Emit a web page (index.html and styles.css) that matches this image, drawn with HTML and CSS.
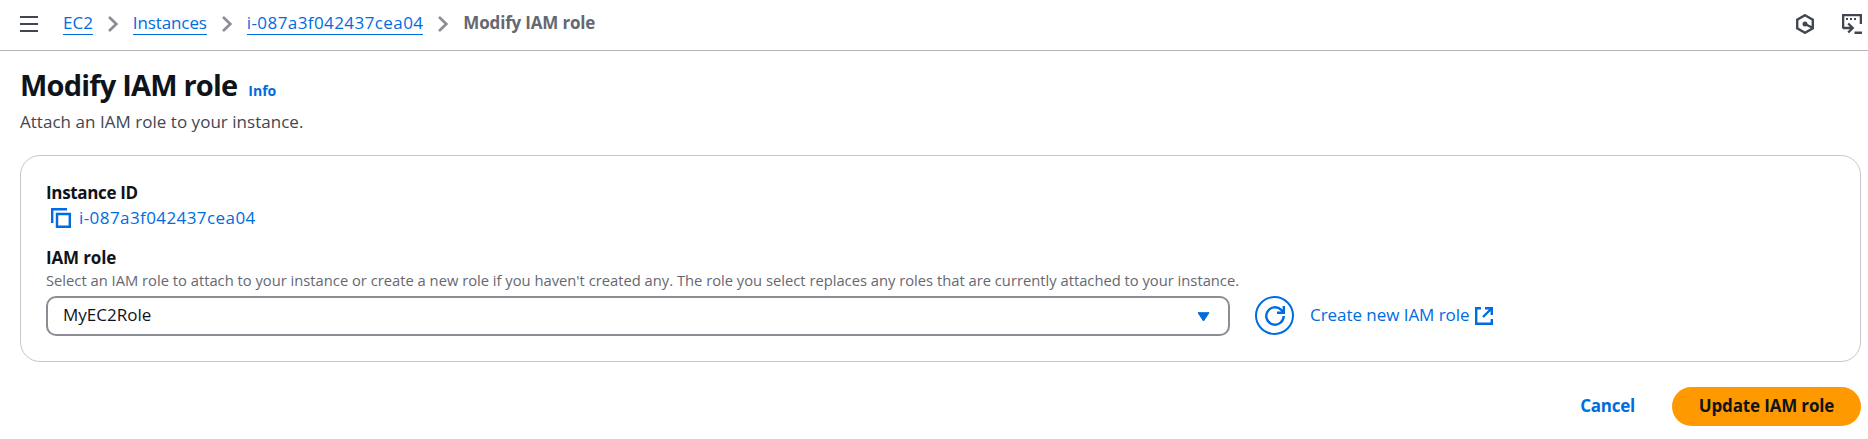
FILE: index.html
```html
<!DOCTYPE html>
<html lang="en">
<head>
<meta charset="utf-8">
<title>Modify IAM role</title>
<link rel="stylesheet" href="styles.css">
</head>
<body>
<header class="topbar">
  <svg class="menu" width="18" height="16" viewBox="0 0 18 16"><path d="M0 1h18M0 8h18M0 15h18"/></svg>
  <nav class="crumbs">
    <a class="c1" href="#">EC2</a>
    <svg class="chev" width="10" height="16" viewBox="0 0 10 16"><path d="M1 1l7.3 7L1 15"/></svg>
    <a class="c2" href="#">Instances</a>
    <svg class="chev" width="10" height="16" viewBox="0 0 10 16"><path d="M1 1l7.3 7L1 15"/></svg>
    <a class="c3" href="#">i-087a3f042437cea04</a>
    <svg class="chev" width="10" height="16" viewBox="0 0 10 16"><path d="M1 1l7.3 7L1 15"/></svg>
    <b class="c4">Modify IAM role</b>
  </nav>
  <div class="tools">
    <svg width="18" height="20" viewBox="0 0 18 20"><path d="M9 1.2l7.8 4.4v8.800L9 18.800l-7.800-4.400V5.600z"/><path d="M9 10l7 3.500"/><circle cx="9" cy="10" r="2.500" class="solid"/></svg>
    <svg width="20" height="20" viewBox="0 0 20 20"><path d="M1.100 14.500V1.100h17.800V10M1 14h9.500M6.200 9.500l4.500 4.500-4.500 4.500M12.500 18.800H20"/><path class="dots" d="M4 5h10"/></svg>
  </div>
</header>
<main class="page">
  <div class="heading"><h1>Modify IAM role</h1><a class="info" href="#">Info</a></div>
  <p class="sub">Attach an IAM role to your instance.</p>
  <section class="card">
    <div class="label l1">Instance ID</div>
    <div class="idrow">
      <svg width="20" height="20" viewBox="0 0 20 20"><path d="M1.200 15V1.200H16"/><path d="M6 6h12.800v12.800H6z"/></svg>
      <a class="id" href="#">i-087a3f042437cea04</a>
    </div>
    <div class="label l2">IAM role</div>
    <div class="hint">Select an IAM role to attach to your instance or create a new role if you haven't created any. The role you select replaces any roles that are currently attached to your instance.</div>
    <div class="controls">
      <div class="select"><span>MyEC2Role</span><svg width="13" height="10" viewBox="0 0 13 10"><path d="M1 .7h11L6.500 9z"/></svg></div>
      <button class="refresh" aria-label="Refresh"><svg width="20" height="20" viewBox="0 0 20 20"><path d="M18.700 10a8.700 8.700 0 1 1-2.500-6.100l2 2.100"/><path d="M18.800 0v6.800H12"/></svg></button>
      <a class="create" href="#">Create new IAM role</a>
      <svg class="ext" width="18" height="18" viewBox="0 0 18 18"><path d="M6 1.200H1.200v15.600h15.600V12M10 1.200h6.800V8M16.500 1.500L8 10"/></svg>
    </div>
  </section>
  <footer class="actions"><a class="cancel" href="#">Cancel</a><button class="update"><span>Update IAM role</span></button></footer>
</main>
</body>
</html>
```
FILE: styles.css
```css
* { box-sizing: border-box; }
body { margin: 0; width: 1868px; height: 439px; overflow: hidden; background: #fff; color: #0f141a; font: 17px/24px "Open Sans", "Noto Sans", sans-serif; }
a { color: #006ce0; text-decoration: none; white-space: nowrap; }
svg { flex: none; fill: none; stroke: currentColor; stroke-width: 2.4; }
button { font: inherit; padding: 0; }
.topbar { display: flex; align-items: center; height: 51px; padding: 0 2px 3px 20px; border-bottom: 1px solid #b4b4bb; color: #424650; }
.menu { stroke-width: 2; }
.crumbs { display: flex; align-items: center; margin-left: 25px; }
.crumbs a { border-bottom: 1px solid #006ce0; line-height: 20px; height: 22px; }
.c2 { letter-spacing: -.1px; }
.c3, .id { letter-spacing: .42px; }
.c4 { letter-spacing: -.17px; line-height: 22px; padding-bottom: 2px; }
.chev { color: #8c8c94; margin: 0 14.9px 0 15px; stroke-width: 2.6; }
.crumbs b { color: #656871; white-space: nowrap; }
.tools { display: flex; align-items: center; gap: 28px; margin-left: auto; margin-right: 4px; }
.solid { fill: currentColor; stroke: none; }
.tools .dots { stroke-dasharray: 2 2; stroke-width: 2; }
.page { padding: 16px 7px 0 20px; }
.heading { display: flex; align-items: baseline; gap: 11px; height: 36px; }
h1 { margin: 0; font-size: 29px; line-height: 36px; letter-spacing: -.8px; white-space: nowrap; }
.info { font-size: 14px; font-weight: 700; }
.sub { margin: 7px 0 0; color: #424650; letter-spacing: .03px; white-space: nowrap; }
.card { margin-top: 21px; height: 207px; padding: 25px 25px 0; border: 1px solid #c6c6cd; border-radius: 20px; }
.label { font-weight: 700; white-space: nowrap; }
.l1 { letter-spacing: -.33px; }
.idrow { display: flex; align-items: center; gap: 8px; height: 26px; padding-left: 5px; color: #006ce0; }
.l2 { margin-top: 15px; letter-spacing: -.15px; }
.hint { font-size: 14.74px; line-height: 20px; height: 22px; color: #656871; white-space: nowrap; }
.controls { display: flex; align-items: center; margin-top: 3px; padding-top: 1px; }
.select { width: 1184px; height: 40px; display: flex; align-items: center; justify-content: space-between; padding: 0 18px 2px 15px; border: 2px solid #8c8c94; border-radius: 10px; }
.select svg { margin-top: 3px; fill: #006ce0; stroke: #006ce0; stroke-width: 1; stroke-linejoin: round; }
.refresh { align-self: flex-start; display: grid; place-items: center; width: 39px; height: 39px; margin: 0 16px 0 25px; border: 2px solid #006ce0; border-radius: 50%; background: #fff; color: #006ce0; }
.create { letter-spacing: -.05px; padding-bottom: 2px; }
.ext { color: #006ce0; margin-left: 5px; }
.actions { display: flex; justify-content: flex-end; align-items: center; gap: 37px; margin-top: 25px; font-weight: 700; }
.cancel { letter-spacing: -.25px; padding-bottom: 1px; }
.update { width: 189px; height: 39px; padding-bottom: 1px; border: 0; border-radius: 20px; background: #ff9900; color: #0f141a; font-weight: 700; letter-spacing: -.15px; white-space: nowrap; }
```
